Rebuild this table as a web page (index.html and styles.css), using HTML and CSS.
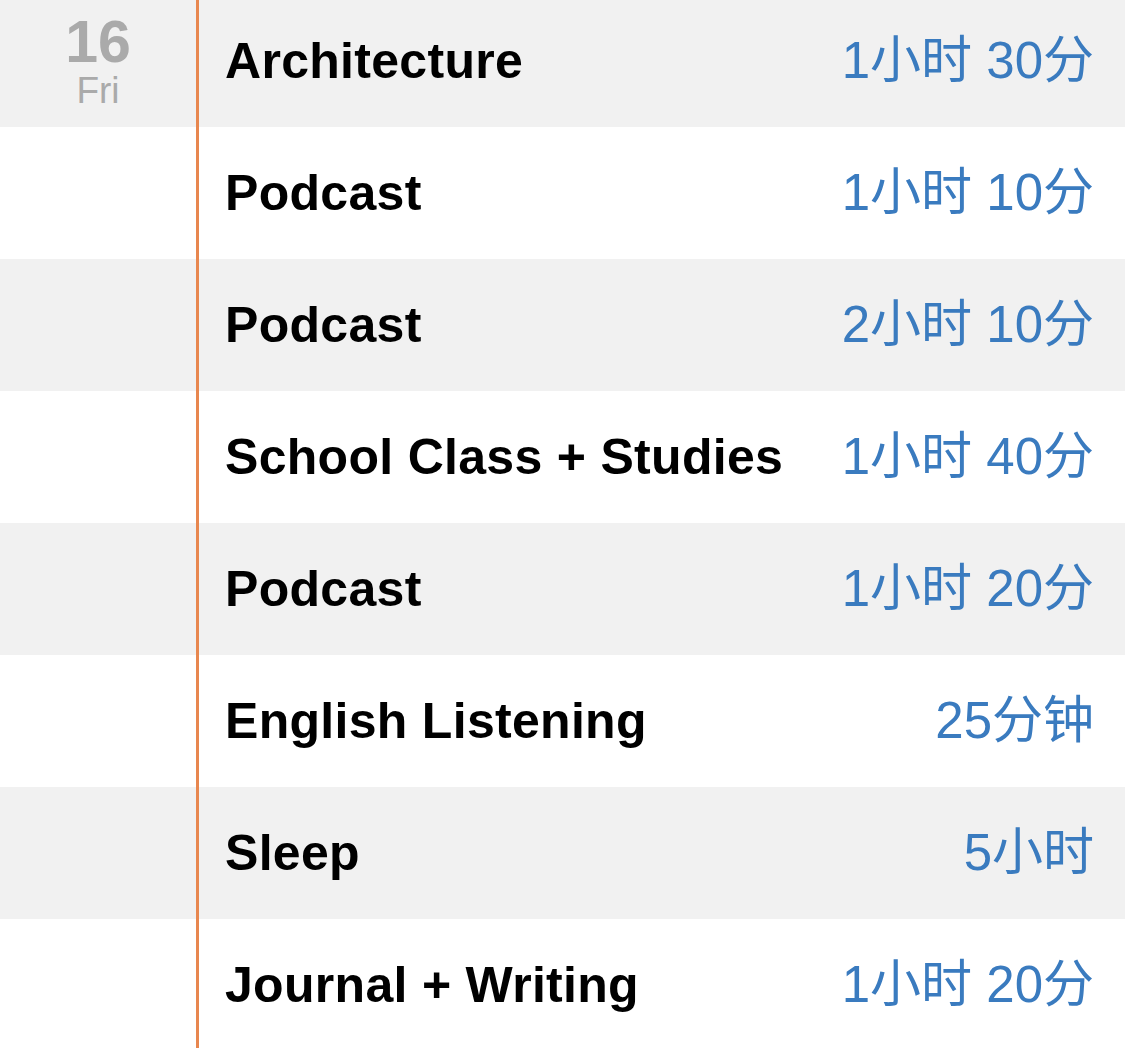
FILE: index.html
```html
<!DOCTYPE html>
<html lang="zh-CN">
<head>
<meta charset="utf-8">
<link rel="stylesheet" href="styles.css">
</head>
<body>
<div class="list">
  <div class="row shade">
    <div class="date"><span class="day">16</span><span class="wd">Fri</span></div>
    <div class="entry"><span class="title">Architecture</span><span class="dur">1小时 30分</span></div>
  </div>
  <div class="row">
    <div class="date"></div>
    <div class="entry"><span class="title">Podcast</span><span class="dur">1小时 10分</span></div>
  </div>
  <div class="row shade">
    <div class="date"></div>
    <div class="entry"><span class="title">Podcast</span><span class="dur">2小时 10分</span></div>
  </div>
  <div class="row">
    <div class="date"></div>
    <div class="entry"><span class="title">School Class + Studies</span><span class="dur">1小时 40分</span></div>
  </div>
  <div class="row shade">
    <div class="date"></div>
    <div class="entry"><span class="title">Podcast</span><span class="dur">1小时 20分</span></div>
  </div>
  <div class="row">
    <div class="date"></div>
    <div class="entry"><span class="title">English Listening</span><span class="dur">25分钟</span></div>
  </div>
  <div class="row shade">
    <div class="date"></div>
    <div class="entry"><span class="title">Sleep</span><span class="dur">5小时</span></div>
  </div>
  <div class="row">
    <div class="date"></div>
    <div class="entry"><span class="title">Journal + Writing</span><span class="dur">1小时 20分</span></div>
  </div>
</div>
</body>
</html>
```

FILE: styles.css
```css
html, body {
  margin: 0;
  padding: 0;
  background: #ffffff;
  overflow: hidden;
}
body {
  width: 1125px;
  height: 1048px;
  font-family: "Liberation Sans", Arial, "Noto Sans CJK SC", sans-serif;
}
.list {
  margin-top: -5px;
  display: flex;
  flex-direction: column;
}
.row {
  display: flex;
  height: 132px;
  background: #ffffff;
}
.row.shade {
  background: #f1f1f1;
}
.date {
  width: 196px;
  flex: none;
  display: flex;
  flex-direction: column;
  align-items: center;
  padding-top: 18px;
  box-sizing: border-box;
  color: #aaaaaa;
}
.day {
  font-weight: bold;
  font-size: 59px;
  line-height: 59px;
  height: 59px;
}
.wd {
  font-size: 37px;
  line-height: 37px;
  height: 37px;
  margin-top: 0;
}
.entry {
  flex: 1;
  display: flex;
  align-items: center;
  justify-content: space-between;
  border-left: 3px solid #e8874f;
  padding: 0 31px 0 26px;
}
.title {
  font-weight: bold;
  font-size: 50px;
  line-height: 58px;
  color: #000000;
  letter-spacing: 0.3px;
}
.dur {
  font-size: 51px;
  line-height: 58px;
  color: #3a7bbf;
  white-space: nowrap;
}
```
